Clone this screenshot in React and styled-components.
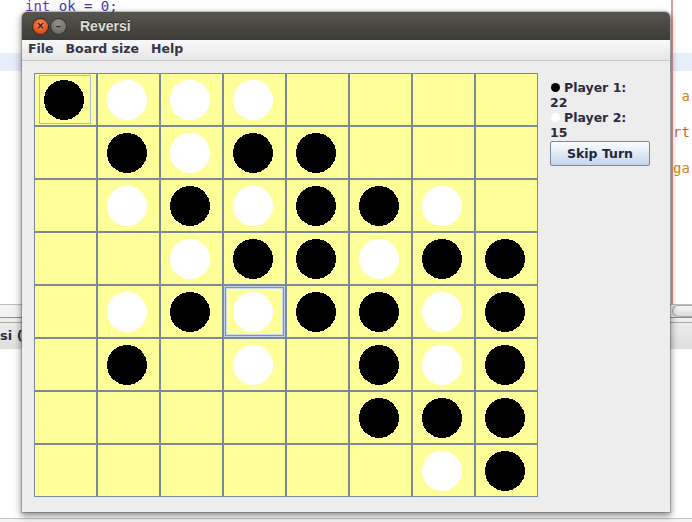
import React from 'react';
import styled, { createGlobalStyle, css } from 'styled-components';

const GlobalStyle = createGlobalStyle`
  html, body {
    margin: 0;
    padding: 0;
    background: #ffffff;
  }
  * { box-sizing: border-box; }
`;

// board state: B = black, W = white, . = empty
const BOARD = [
  'BWWW....',
  '.BWBB...',
  '.WBWBBW.',
  '..WBBWBB',
  '.WBWBBWB',
  '.B.W.BWB',
  '.....BBB',
  '......WB',
];

const EDITOR_LINES = [
  { code: 'int ok = 0;', tail: '' },
  { code: '', tail: '' },
  { code: '', tail: '' },
  { code: '', tail: '', current: true },
  { code: '', tail: '' },
  { code: '', tail: ' a', tailColor: '#d9860c' },
  { code: '', tail: '' },
  { code: '', tail: 'rt', tailColor: '#c8692c' },
  { code: '', tail: '' },
  { code: '', tail: 'ga', tailColor: '#d4860e' },
  { code: '', tail: '' },
  { code: '', tail: '' },
  { code: '', tail: '' },
  { code: '', tail: '' },
  { code: '', tail: '' },
  { code: '', tail: '' },
  { code: '', tail: '' },
];

const Desktop = styled.div`
  position: relative;
  width: 692px;
  height: 522px;
  overflow: hidden;
  background: #ffffff;
  display: flex;
  flex-direction: column;
`;

/* ---------- background IDE ---------- */

const Editor = styled.div`
  height: 305px;
  overflow: hidden;
  display: flex;
  flex-direction: column;
  margin-top: -1px;
  flex-shrink: 0;
`;

const Line = styled.div`
  display: grid;
  grid-template-columns: 671px 21px;
  height: 18px;
  flex-shrink: 0;
  background: ${p => (p.$current ? '#e6eefa' : 'transparent')};
  font-family: 'DejaVu Sans Mono', monospace;
  font-size: 14px;
  line-height: 14px;
  white-space: pre;
`;

const CodeCell = styled.div`
  padding-left: 25px;
  color: #3a3ab0;
  .kw { color: #7a2fb8; }
`;

const MarginCell = styled.div`
  border-left: 2px solid #dc9c9c;
  color: ${p => p.$color || '#d9860c'};
  overflow: hidden;
`;

const HScroll = styled.div`
  height: 13px;
  flex-shrink: 0;
  border-top: 1px solid #bdbdbd;
  background: #f3f3f3;
  display: flex;
  justify-content: flex-end;
`;

const Thumb = styled.div`
  width: 20px;
  height: 12px;
  border: 1px solid #a9a9a9;
  border-right: none;
  border-radius: 6px 0 0 6px;
  background: linear-gradient(#f6f6f6, #dcdcdc);
`;

const TabStrip = styled.div`
  height: 32px;
  flex-shrink: 0;
  border-top: 1px solid #8e8e8e;
  background: linear-gradient(#efefef, #dedede);
  display: flex;
  flex-direction: column;
`;

const TabLine = styled.div`
  height: 5px;
  border-bottom: 1px solid #a8a8a8;
`;

const TabLabel = styled.div`
  padding: 5px 0 0 0;
  font-family: 'DejaVu Sans', sans-serif;
  font-weight: bold;
  font-size: 13px;
  color: #2e2e48;
  white-space: nowrap;
`;

const Fill = styled.div`
  flex: 1;
  background: #ffffff;
`;

const BottomRule = styled.div`
  height: 4px;
  flex-shrink: 0;
  border-top: 1px solid #c4c4c4;
  background: #f4f4f4;
`;

/* ---------- Reversi window ---------- */

const Window = styled.div`
  position: absolute;
  left: 22px;
  top: 12px;
  width: 648px;
  height: 500px;
  display: flex;
  flex-direction: column;
  background: #ededed;
  border-radius: 5px 5px 0 0;
  box-shadow: 0 0 0 1px rgba(0, 0, 0, 0.18), 0 3px 7px 1px rgba(0, 0, 0, 0.45);
  font-family: 'DejaVu Sans', sans-serif;
`;

const TitleBar = styled.div`
  height: 28px;
  flex-shrink: 0;
  display: flex;
  align-items: center;
  padding-left: 11px;
  gap: 3px;
  border-radius: 5px 5px 0 0;
  background: linear-gradient(#57554f, #3c3b37);
`;

const WinButton = styled.div`
  width: 15px;
  height: 15px;
  border-radius: 50%;
  display: flex;
  align-items: center;
  justify-content: center;
  font-family: 'DejaVu Sans', sans-serif;
  font-weight: bold;
  line-height: 1;
  ${p =>
    p.$kind === 'close'
      ? css`
          background: radial-gradient(circle at 50% 35%, #f69163, #e2551f 60%, #b9400e);
          box-shadow: 0 0 0 1px #3a2a20;
          color: #3b1a0a;
          font-size: 10px;
        `
      : css`
          background: radial-gradient(circle at 50% 35%, #95928b, #77746e 60%, #5a5853);
          box-shadow: 0 0 0 1px #33322e;
          color: #2e2d2a;
          font-size: 11px;
        `}
`;

const Title = styled.div`
  margin-left: 11px;
  font-family: 'Liberation Sans', Arial, sans-serif;
  font-weight: bold;
  font-size: 14px;
  color: #dfdbd2;
  text-shadow: 0 -1px 0 #2a2925;
`;

const MenuBar = styled.div`
  height: 21px;
  flex-shrink: 0;
  display: flex;
  gap: 12px;
  padding: 1px 0 0 6px;
  background: linear-gradient(#f8f8f8, #e7e7e7);
  border-bottom: 1px solid #c9c9c9;
`;

const MenuItem = styled.div`
  font-weight: bold;
  font-size: 12.5px;
  line-height: 15px;
  color: #35354a;
`;

const Body = styled.div`
  flex: 1;
  display: flex;
  align-items: flex-start;
  gap: 12px;
  padding: 12px 0 0 12px;
`;

const Board = styled.div`
  display: grid;
  grid-template-columns: repeat(8, 63px);
  grid-template-rows: repeat(8, 53px);
  background: #ffff99;
`;

const Cell = styled.div`
  position: relative;
  border: 1px solid #7a8a99;
  background: #ffff99;
  display: flex;
  align-items: center;
  padding-left: 9px;
  ${p =>
    p.$hover &&
    css`
      box-shadow: inset 0 0 0 1px #c3d3e3, inset 0 0 0 2px #8393a4, inset 0 0 0 3px #cfdcea;
    `}
`;

const FocusRing = styled.div`
  position: absolute;
  top: 1px;
  left: 4px;
  right: 5px;
  bottom: 1px;
  border: 1px solid #a9bfd6;
  pointer-events: none;
`;

const Side = styled.div`
  width: 100px;
  margin-top: 7px;
  display: flex;
  flex-direction: column;
  font-weight: bold;
  font-size: 12.5px;
  line-height: 15px;
  color: #2c2c3e;
`;

const PlayerLine = styled.div`
  display: flex;
  align-items: center;
  white-space: nowrap;
`;

const Dot = styled.span`
  width: 9px;
  height: 9px;
  margin: 0 4px 0 1px;
  border-radius: 50%;
  background: ${p => p.$color};
`;

const Score = styled.div``;

const SkipButton = styled.button`
  margin-top: 1px;
  width: 100px;
  height: 25px;
  padding: 0;
  border: 1px solid #7a8a99;
  border-radius: 2px;
  background: linear-gradient(#fbfdff, #e3ecf6 45%, #c3d6ea);
  font-family: 'DejaVu Sans', sans-serif;
  font-weight: bold;
  font-size: 12.5px;
  color: #26263a;
`;

function Piece({ color }) {
  return (
    <svg width="40" height="40" viewBox="0 0 40 40" shapeRendering="crispEdges">
      <circle cx="20" cy="20" r="20" fill={color === 'B' ? '#000000' : '#ffffff'} />
    </svg>
  );
}

export default function App() {
  return (
    <>
      <GlobalStyle />
      <Desktop>
        <Editor>
          {EDITOR_LINES.map((l, i) => (
            <Line key={i} $current={l.current}>
              <CodeCell>
                {l.code && (
                  <>
                    <span className="kw">int</span> ok = 0;
                  </>
                )}
              </CodeCell>
              <MarginCell $color={l.tailColor}>{l.tail}</MarginCell>
            </Line>
          ))}
        </Editor>
        <HScroll>
          <Thumb />
        </HScroll>
        <TabStrip>
          <TabLine />
          <TabLabel>si (run)</TabLabel>
        </TabStrip>
        <Fill />
        <BottomRule />

        <Window>
          <TitleBar>
            <WinButton $kind="close">×</WinButton>
            <WinButton $kind="min">–</WinButton>
            <Title>Reversi</Title>
          </TitleBar>
          <MenuBar>
            <MenuItem>File</MenuItem>
            <MenuItem>Board size</MenuItem>
            <MenuItem>Help</MenuItem>
          </MenuBar>
          <Body>
            <Board>
              {BOARD.map((row, r) =>
                row.split('').map((c, col) => (
                  <Cell key={`${r}-${col}`} $hover={r === 4 && col === 3}>
                    {r === 0 && col === 0 && <FocusRing />}
                    {c !== '.' && <Piece color={c} />}
                  </Cell>
                ))
              )}
            </Board>
            <Side>
              <PlayerLine>
                <Dot $color="#000000" />
                Player 1:
              </PlayerLine>
              <Score>22</Score>
              <PlayerLine>
                <Dot $color="#ffffff" />
                Player 2:
              </PlayerLine>
              <Score>15</Score>
              <SkipButton>Skip Turn</SkipButton>
            </Side>
          </Body>
        </Window>
      </Desktop>
    </>
  );
}
